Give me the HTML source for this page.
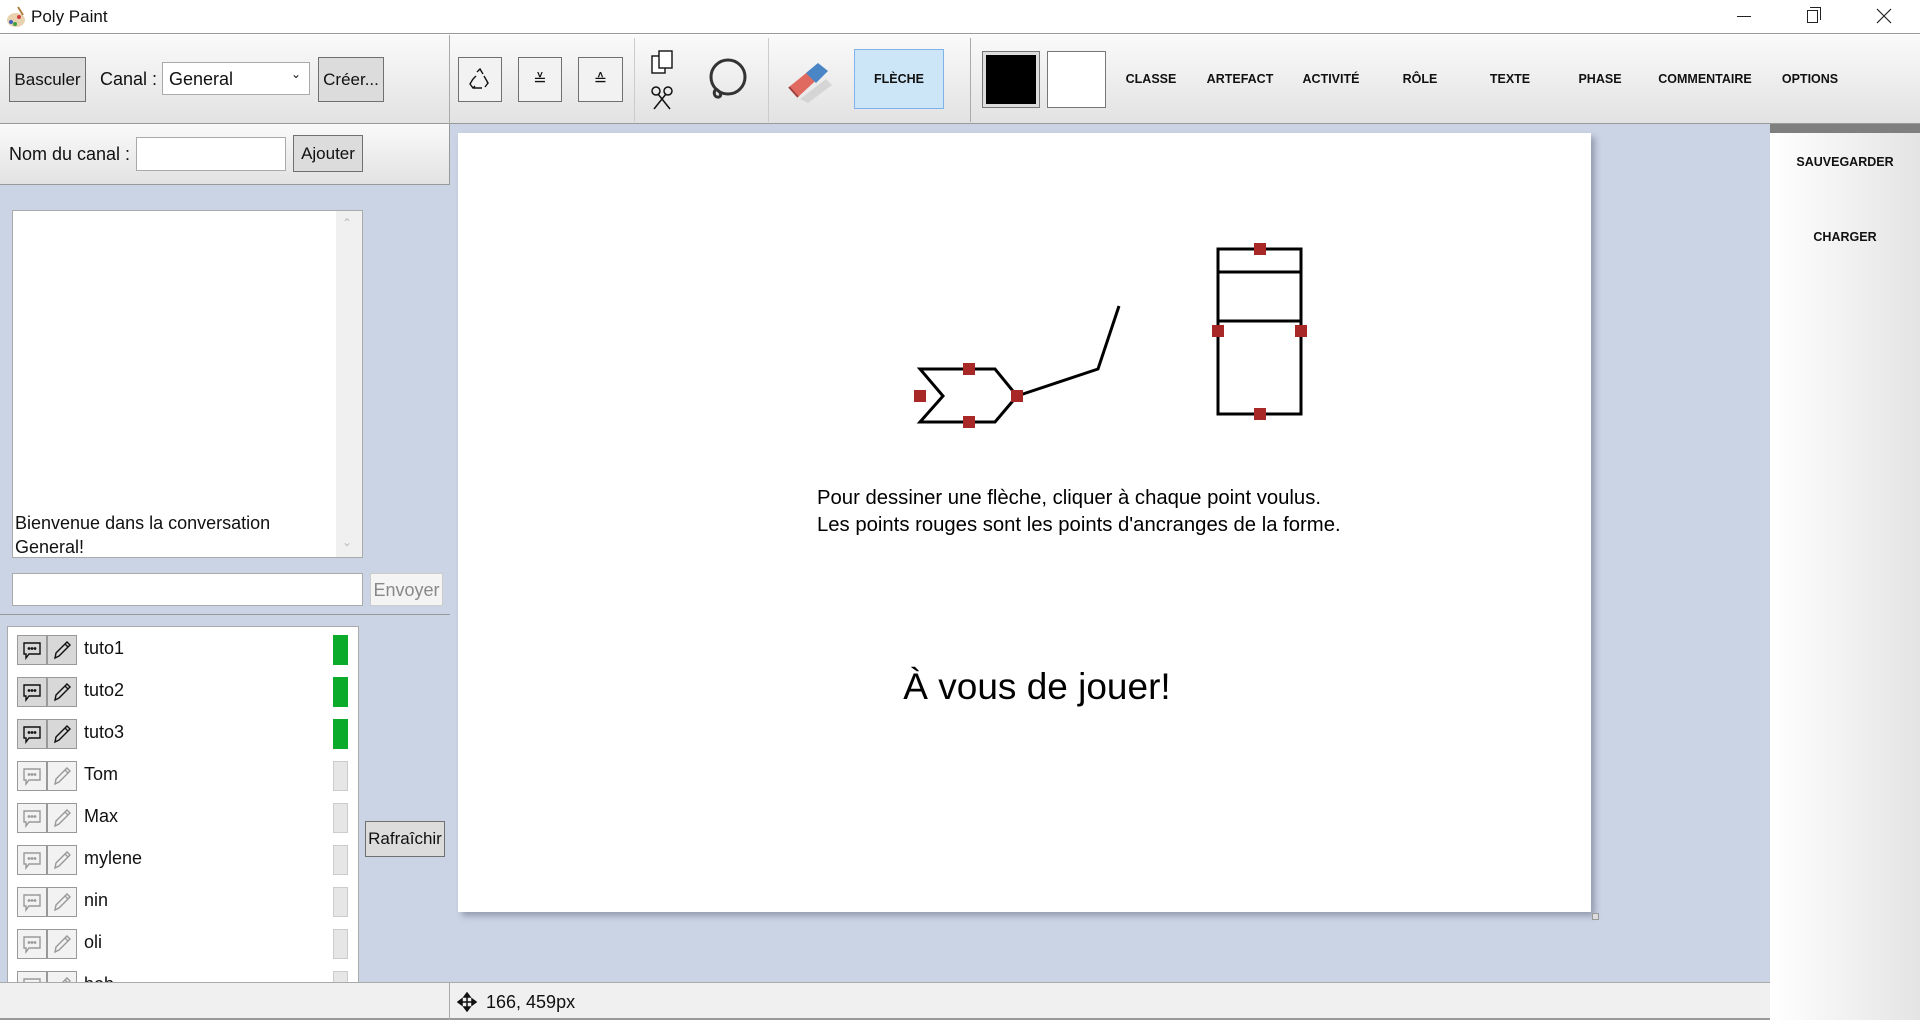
<!DOCTYPE html>
<html><head><meta charset="utf-8"><style>
*{box-sizing:border-box;margin:0;padding:0}
body{width:1920px;height:1020px;overflow:hidden;background:#fff;font-family:"Liberation Sans",sans-serif;position:relative;color:#111}
.a{position:absolute}
.btn{position:absolute;background:#dcdcdc;border:1px solid #707070;font-size:17px;display:flex;align-items:center;justify-content:center;color:#111}
.tb{background:linear-gradient(#fafafa,#e2e2e2)}
.lbl{position:absolute;top:72px;font-size:12.5px;font-weight:bold;transform:translateX(-50%);white-space:nowrap;color:#111}
.row{position:absolute;left:17px;height:30px;width:332px}
.ib{position:absolute;top:0;width:30px;height:30px;border:1px solid #999;display:flex;align-items:center;justify-content:center}
.nm{position:absolute;left:67px;top:3px;font-size:18px}
.st{position:absolute;left:316px;top:0;width:15px;height:30px}
</style></head><body>
<div class="a" style="left:0;top:0;width:1920px;height:34px;background:#fff;border-bottom:1px solid #999"></div>
<svg class="a" style="left:5px;top:5px" width="22" height="24" viewBox="0 0 22 24"><ellipse cx="11" cy="15" rx="9" ry="7" fill="#e8d2b0"/><circle cx="6" cy="17" r="2" fill="#4060c0"/><circle cx="10" cy="19" r="2" fill="#40a040"/><circle cx="14" cy="12" r="2" fill="#d04040"/><path d="M13 2 L18 10" stroke="#b08040" stroke-width="2"/></svg>
<div class="a" style="left:31px;top:7px;font-size:17px">Poly Paint</div>
<div class="a" style="left:1737px;top:16px;width:14px;height:1px;background:#222"></div>
<div class="a" style="left:1807px;top:10px;width:11px;height:13px;border:1px solid #222"></div>
<div class="a" style="left:1810px;top:7px;width:11px;height:13px;border-top:1px solid #222;border-right:1px solid #222"></div>
<svg class="a" style="left:1876px;top:8px" width="16" height="16"><path d="M1 1L15 15M15 1L1 15" stroke="#222" stroke-width="1.2"/></svg>

<div class="a tb" style="left:0;top:35px;width:1920px;height:89px;border-bottom:1px solid #999"></div>
<div class="btn" style="left:9px;top:57px;width:77px;height:45px">Basculer</div>
<div class="a" style="left:100px;top:69px;font-size:18px">Canal :</div>
<div class="a" style="left:162px;top:62px;width:148px;height:33px;background:#fff;border:1px solid #aaa;font-size:18px;padding:6px 0 0 6px">General<span style="position:absolute;right:8px;top:4px;font-size:12px">&#8964;</span></div>
<div class="btn" style="left:318px;top:57px;width:66px;height:45px">Créer...</div>
<div class="a" style="left:449px;top:35px;width:1px;height:89px;background:#aaa"></div>
<div class="btn" style="left:458px;top:57px;width:44px;height:45px;background:#f2f2f2"><svg width="26" height="26" viewBox="0 0 26 26" fill="none" stroke="#111" stroke-width="1.4"><path d="M10 5l3-3 3 5M17 9l4 7-3 4M15 21H6l-3-4 3-5M9 9l-3 3M6 21l2-2M20 14l1 3"/></svg></div>
<div class="btn" style="left:518px;top:57px;width:44px;height:45px;background:#f2f2f2;font-size:16px">&#8794;</div>
<div class="btn" style="left:578px;top:57px;width:45px;height:45px;background:#f2f2f2;font-size:16px">&#8793;</div>
<div class="a" style="left:634px;top:38px;width:1px;height:84px;background:#ccc"></div>
<svg class="a" style="left:650px;top:49px" width="26" height="26"><rect x="2" y="7" width="13" height="17" fill="#fff" stroke="#111" stroke-width="1.4"/><rect x="9" y="2" width="13" height="17" fill="#fff" stroke="#111" stroke-width="1.4"/></svg>
<svg class="a" style="left:649px;top:85px" width="26" height="26" fill="none" stroke="#111" stroke-width="1.5"><circle cx="7" cy="6" r="4"/><circle cx="19" cy="6" r="4"/><path d="M9 9L21 24M17 9L5 24"/></svg>
<svg class="a" style="left:704px;top:57px" width="46" height="48" fill="none" stroke="#333" stroke-width="3"><ellipse cx="24" cy="20" rx="17" ry="17"/><path d="M12 32c-3 3-2 9 3 8 3-1 2-5-3-8"/></svg>
<div class="a" style="left:768px;top:38px;width:1px;height:84px;background:#ccc"></div>
<svg class="a" style="left:786px;top:55px" width="48" height="48"><path d="M14 44 L40 24 L46 30 L22 48Z" fill="#ccc" opacity=".7"/><path d="M3 32 L30 10 L38 18 L12 42Z" fill="#e06a60"/><path d="M20 18 L32 8 L42 16 L30 28Z" fill="#4a86c6"/><path d="M3 32 L12 42" stroke="#a04040" stroke-width="2"/></svg>
<div class="a" style="left:854px;top:49px;width:90px;height:60px;background:#cde6f7;border:1px solid #7eb4ea;font-size:12.5px;font-weight:bold;display:flex;align-items:center;justify-content:center">FLÈCHE</div>
<div class="a" style="left:970px;top:38px;width:1px;height:84px;background:#aaa"></div>
<div class="a" style="left:982px;top:51px;width:58px;height:57px;background:#ddd;border:1px solid #777;padding:3px"><div style="width:100%;height:100%;background:#000"></div></div>
<div class="a" style="left:1047px;top:51px;width:59px;height:57px;background:#fff;border:1px solid #777"></div>
<div class="lbl" style="left:1151px">CLASSE</div>
<div class="lbl" style="left:1240px">ARTEFACT</div>
<div class="lbl" style="left:1331px">ACTIVITÉ</div>
<div class="lbl" style="left:1420px">RÔLE</div>
<div class="lbl" style="left:1510px">TEXTE</div>
<div class="lbl" style="left:1600px">PHASE</div>
<div class="lbl" style="left:1705px">COMMENTAIRE</div>
<div class="lbl" style="left:1810px">OPTIONS</div>

<div class="a" style="left:0;top:124px;width:450px;height:858px;background:#cbd4e4"></div>
<div class="a tb" style="left:0;top:124px;width:450px;height:61px;border-bottom:1px solid #999;border-right:1px solid #999"></div>
<div class="a" style="left:9px;top:144px;font-size:18px">Nom du canal :</div>
<div class="a" style="left:136px;top:137px;width:150px;height:34px;background:#fff;border:1px solid #aaa"></div>
<div class="btn" style="left:293px;top:135px;width:70px;height:37px">Ajouter</div>
<div class="a" style="left:12px;top:210px;width:351px;height:348px;background:#fff;border:1px solid #aaa"></div>
<div class="a" style="left:336px;top:211px;width:26px;height:346px;background:#f0f0f0"></div>
<div class="a" style="left:342px;top:216px;font-size:12px;color:#bbb">&#8963;</div>
<div class="a" style="left:342px;top:535px;font-size:12px;color:#bbb">&#8964;</div>
<div class="a" style="left:15px;top:511px;font-size:18px;line-height:24px">Bienvenue dans la conversation<br>General!</div>
<div class="a" style="left:12px;top:573px;width:351px;height:33px;background:#fff;border:1px solid #aaa"></div>
<div class="a" style="left:370px;top:573px;width:73px;height:33px;background:#f4f4f4;border:1px solid #ccc;color:#888;font-size:18px;text-align:center;padding-top:6px">Envoyer</div>
<div class="a" style="left:0;top:614px;width:450px;height:1px;background:#999"></div>
<div class="a" style="left:7px;top:626px;width:352px;height:357px;background:#fff;border:1px solid #aaa"></div>
<div id="list" class="a" style="left:0;top:0;width:360px;height:982px;overflow:hidden;clip-path:inset(627px 0 0 0)"></div>
<div class="btn" style="left:365px;top:821px;width:80px;height:36px">Rafraîchir</div>

<div class="a" style="left:450px;top:124px;width:1320px;height:858px;background:#cbd4e4"></div>
<div class="a" style="left:458px;top:133px;width:1133px;height:779px;background:#fff;box-shadow:4px 4px 6px rgba(80,90,110,.45)"></div>
<div class="a" style="left:1592px;top:913px;width:7px;height:7px;background:#ddd;border:1px solid #999"></div>
<svg class="a" style="left:0;top:0" width="1920" height="1020">
<g fill="none" stroke="#000" stroke-width="3">
<path d="M920 369H995L1017 396L995 422H920L943 396Z"/>
<path d="M1017 396L1098 369L1119 306"/>
<rect x="1218" y="249" width="83" height="165"/>
<path d="M1218 272H1301M1218 321H1301"/>
</g>
<g fill="#a82828">
<rect x="963" y="363" width="12" height="12"/><rect x="963" y="416" width="12" height="12"/>
<rect x="914" y="390" width="12" height="12"/><rect x="1011" y="390" width="12" height="12"/>
<rect x="1254" y="243" width="12" height="12"/><rect x="1212" y="325" width="12" height="12"/>
<rect x="1295" y="325" width="12" height="12"/><rect x="1254" y="408" width="12" height="12"/>
</g>
<text x="817" y="504" font-size="20.3" font-family="Liberation Sans">Pour dessiner une flèche, cliquer à chaque point voulus.</text>
<text x="817" y="531" font-size="20.3" font-family="Liberation Sans">Les points rouges sont les points d'ancranges de la forme.</text>
<text x="1037" y="699" font-size="37" text-anchor="middle" font-family="Liberation Sans">À vous de jouer!</text>
</svg>

<div class="a" style="left:1770px;top:124px;width:150px;height:896px;background:linear-gradient(90deg,#fff,#e4e4e4)"></div>
<div class="a" style="left:1770px;top:124px;width:150px;height:9px;background:#7f7f7f"></div>
<div class="a" style="left:1845px;top:155px;font-size:12.5px;font-weight:bold;transform:translateX(-50%)">SAUVEGARDER</div>
<div class="a" style="left:1845px;top:230px;font-size:12.5px;font-weight:bold;transform:translateX(-50%)">CHARGER</div>

<div class="a" style="left:0;top:982px;width:1770px;height:38px;background:#f0f0f0;border-top:1px solid #aaa;border-bottom:2px solid #999"></div>
<div class="a" style="left:449px;top:982px;width:1px;height:38px;background:#aaa"></div>
<svg class="a" style="left:457px;top:992px" width="20" height="20"><path d="M10 1L13 5H7ZM10 19L13 15H7ZM1 10L5 7V13ZM19 10L15 7V13Z M10 4V16M4 10H16" fill="#111" stroke="#111" stroke-width="1.5"/></svg>
<div class="a" style="left:486px;top:992px;font-size:18px">166, 459px</div>

<script>
var users=[["tuto1",1],["tuto2",1],["tuto3",1],["Tom",0],["Max",0],["mylene",0],["nin",0],["oli",0],["bob",0]];
var h="";
users.forEach(function(u,i){
var on=u[1],c=on?"#111":"#999",bg=on?"#d8d8d8":"#f2f2f2";
h+='<div class="row" style="top:'+(635+i*42)+'px">'+
'<div class="ib" style="left:0;background:'+bg+'"><svg width="22" height="20" fill="none" stroke="'+c+'" stroke-width="1.4"><path d="M3 3H19V14H8L5 18V14H3Z"/><circle cx="8" cy="8.5" r=".7" fill="'+c+'"/><circle cx="11" cy="8.5" r=".7" fill="'+c+'"/><circle cx="14" cy="8.5" r=".7" fill="'+c+'"/></svg></div>'+
'<div class="ib" style="left:30px;background:'+bg+'"><svg width="22" height="22" fill="none" stroke="'+c+'" stroke-width="1.4"><path d="M4 19L5 14L16 3L19 6L8 17Z M14 5L17 8"/></svg></div>'+
'<div class="nm">'+u[0]+'</div>'+
'<div class="st" style="background:'+(on?"#0aaa2a":"#e6e6e6")+';border:'+(on?"none":"1px solid #ccc")+'"></div></div>';
});
document.getElementById("list").innerHTML=h;
</script>
</body></html>
